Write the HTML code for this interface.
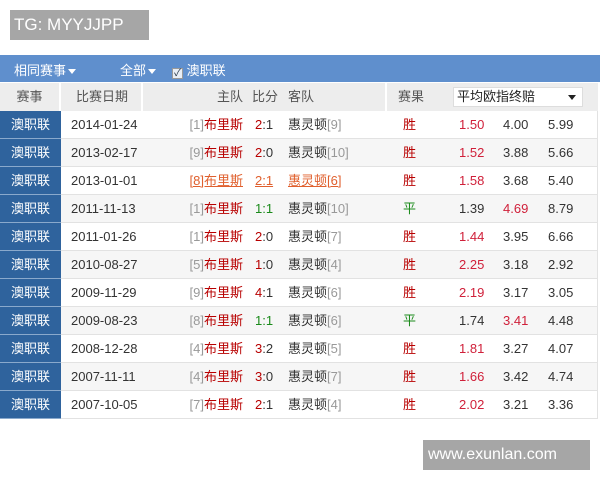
<!DOCTYPE html>
<html><head><meta charset="utf-8">
<style>
*{margin:0;padding:0;box-sizing:border-box}
body{width:600px;height:480px;background:#fff;position:relative;overflow:hidden;font-family:"Liberation Sans","Noto Sans CJK SC",sans-serif;font-size:13px;color:#333}
.wm{position:absolute;background:#a6a6a6;color:#fff;font-size:17px;line-height:30px}
.bar{position:absolute;left:0;top:55px;width:600px;height:27px;background:#5f8fcd;color:#fff;font-size:13px}
.bar span{position:absolute;top:5px}
.tri{display:inline-block;width:0;height:0;border-left:4px solid transparent;border-right:4px solid transparent;border-top:5px solid #fff;vertical-align:middle;margin-left:2px}
.hd{position:absolute;left:0;top:83px;width:598px;height:28px;background:#ededed;color:#555}
.hd div,.r div{position:absolute;top:0;height:28px;line-height:28px;white-space:nowrap}
.r{position:absolute;left:0;width:598px;height:28px;border-bottom:1px solid #e2e2e2;border-right:1px solid #e2e2e2}
.lg{left:0;width:61px;background:#2f639d;color:#fff;text-align:center;border-bottom:1px solid #8aa9cc}
.g{color:#999}.red{color:#b80000}.grn{color:#1a8a1a}.o1{color:#d0203a}
.sel{position:absolute;left:453px;top:87px;width:130px;height:20px;background:#fff;border:1px solid #ddd;color:#222;font-size:13px;line-height:18px;padding-left:3px}
.ul{color:#e0602e;text-decoration:underline}
</style></head><body>
<div class="wm" style="left:10px;top:10px;width:139px;padding-left:4px">TG: MYYJJPP</div>
<div class="bar"><span style="left:14px">相同赛事<i class="tri"></i></span><span style="left:120px">全部<i class="tri"></i></span><span style="left:172px"><i style="display:inline-block;width:11px;height:11px;background:#e8eef6;border:1px solid #999;vertical-align:-1px;color:#234;font-size:10px;line-height:9px;text-align:center;font-style:normal">✓</i> 澳职联</span></div>
<div class="hd">
<div style="left:0;width:61px;text-align:center;border-right:2px solid #fff">赛事</div>
<div style="left:63px;width:80px;text-align:center;border-right:2px solid #fff">比赛日期</div>
<div style="left:205px;width:38px;text-align:right">主队</div>
<div style="left:252px">比分</div>
<div style="left:288px">客队</div>
<div style="left:385px;width:50px;text-align:center;border-left:2px solid #fff;">赛果</div>
</div>
<div class="sel">平均欧指终赔<span style="position:absolute;right:6px;top:7px;width:0;height:0;border-left:4px solid transparent;border-right:4px solid transparent;border-top:5px solid #222"></span></div>
<div id="rows"></div>
<div class="wm" style="left:423px;top:440px;width:167px;padding-left:5px;font-size:16px">www.exunlan.com</div>
<script>
var d=[["2014-01-24",1,"2:1",9,"胜","1.50","4.00","5.99",0],
["2013-02-17",9,"2:0",10,"胜","1.52","3.88","5.66",0],
["2013-01-01",8,"2:1",6,"胜","1.58","3.68","5.40",0],
["2011-11-13",1,"1:1",10,"平","1.39","4.69","8.79",1],
["2011-01-26",1,"2:0",7,"胜","1.44","3.95","6.66",0],
["2010-08-27",5,"1:0",4,"胜","2.25","3.18","2.92",0],
["2009-11-29",9,"4:1",6,"胜","2.19","3.17","3.05",0],
["2009-08-23",8,"1:1",6,"平","1.74","3.41","4.48",1],
["2008-12-28",4,"3:2",5,"胜","1.81","3.27","4.07",0],
["2007-11-11",4,"3:0",7,"胜","1.66","3.42","4.74",0],
["2007-10-05",7,"2:1",4,"胜","2.02","3.21","3.36",0]];
var h="";
d.forEach(function(r,i){
var top=111+i*28,bg=i%2?"#f6f6f6":"#fff",u=i==2;
var s=r[8]?'<span class="grn">'+r[2]+'</span>':'<span class="red">'+r[2][0]+'</span>'+r[2].slice(1);
var home=u?'<span class="ul">['+r[1]+']布里斯</span>':'<span class="g">['+r[1]+']</span><span class="red">布里斯</span>';
var away=u?'<span class="ul">惠灵顿['+r[3]+']</span>':'惠灵顿<span class="g">['+r[3]+']</span>';
if(u)s='<span class="ul">'+r[2]+'</span>';
var o1=r[8]?'<div style="left:459px">'+r[5]+'</div><div class="o1" style="left:503px">'+r[6]+'</div>':'<div class="o1" style="left:459px">'+r[5]+'</div><div style="left:503px">'+r[6]+'</div>';
h+='<div class="r" style="top:'+top+'px;background:'+bg+'"><div class="lg">澳职联</div>'+
'<div style="left:71px">'+r[0]+'</div>'+
'<div style="left:150px;width:93px;text-align:right">'+home+'</div>'+
'<div style="left:255px">'+s+'</div>'+
'<div style="left:288px">'+away+'</div>'+
'<div class="'+(r[8]?'grn':'red')+'" style="left:403px">'+r[4]+'</div>'+o1+
'<div style="left:548px">'+r[7]+'</div></div>';
});
document.getElementById("rows").innerHTML=h;
</script>
</body></html>
